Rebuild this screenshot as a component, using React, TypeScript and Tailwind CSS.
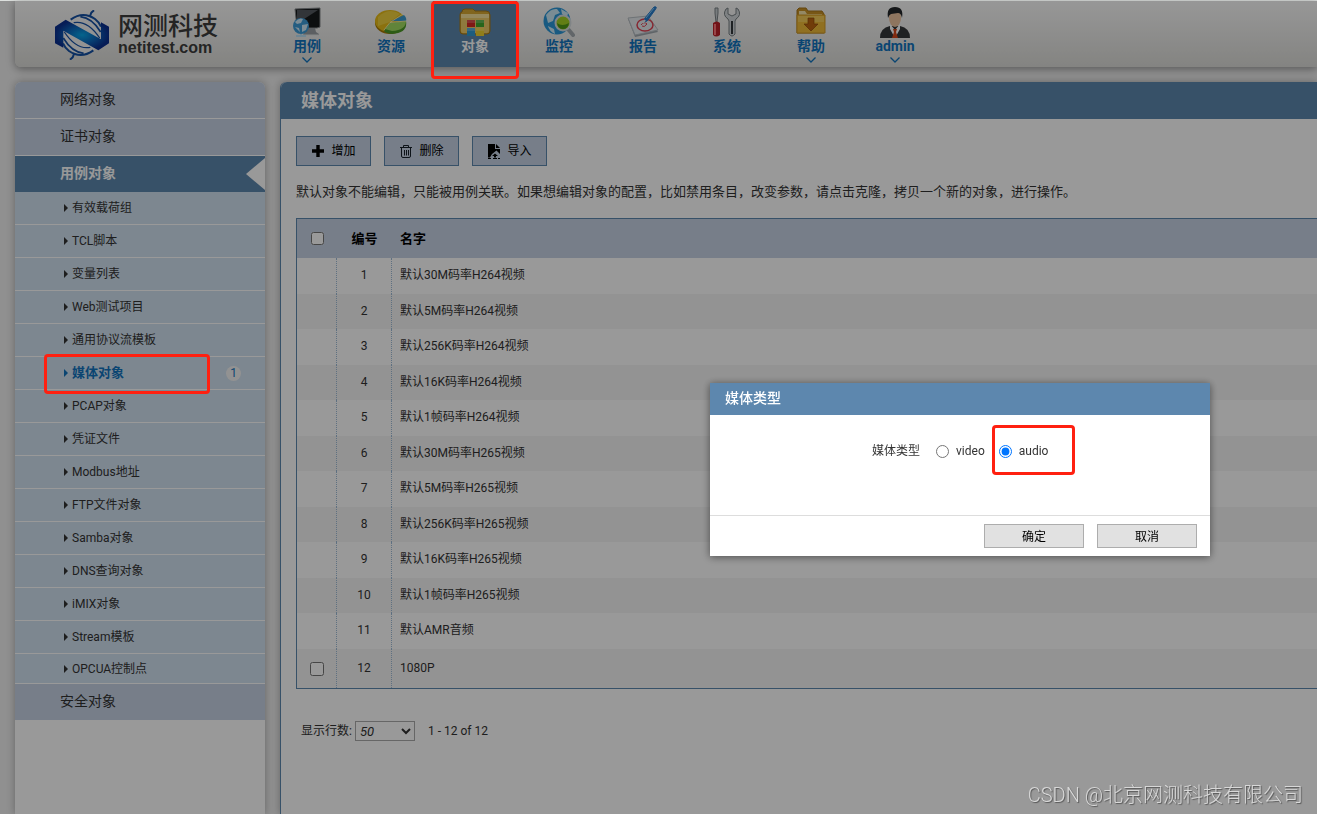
import { useState } from 'react';
import type { ReactNode } from 'react';

interface NavItem {
  label: string;
  icon: ReactNode;
  hasMenu?: boolean;
}

function Logo() {
  return (
    <svg viewBox="0 0 162 150" className="h-[50px] w-[54px]" aria-hidden="true">
      <defs>
        <radialGradient id="logo-blue" cx="50%" cy="50%" r="50%">
          <stop offset="0" stopColor="#08a8ea" />
          <stop offset="0.55" stopColor="#0c66bd" />
          <stop offset="1" stopColor="#0b3090" />
        </radialGradient>
        <g id="logo-globe">
          <path d="M47 29Q84 2 120 27Q132 36 138 50" strokeWidth="6" />
          <path d="M76 20Q112 24 137 66" strokeWidth="5" />
          <path d="M56 38Q98 30 134 84" strokeWidth="4" />
          <path d="M104 21L109 8L117 1" strokeWidth="6" />
        </g>
      </defs>
      <circle cx="81" cy="75" r="57" fill="#f6f6f6" />
      <g fill="none" stroke="#1450a4">
        <use href="#logo-globe" />
        <use href="#logo-globe" transform="rotate(180 81 75)" />
      </g>
      <path d="M0 50L32 29L138 88V37L162 50V100L130 121L25 62V113L0 100Z" fill="url(#logo-blue)" />
    </svg>
  );
}

function CaseIcon() {
  return (
    <svg viewBox="0 0 32 32" className="h-8 w-8" aria-hidden="true">
      <path d="M4 3l25-1v19l-3 1H6z" fill="#17191b" stroke="#85898c" />
      <path d="M6 4h21L10 15 6 13z" fill="#54595f" />
      <path d="M15 22h9l1 4 3 2v1H12z" fill="#999fa4" />
      <path d="M12 29h16" stroke="#e0e3e5" />
      <circle cx="10" cy="20" r="8" fill="#3d9bd8" />
      <path d="M4 16q4-5 8-3l-2 4-4 1zM11 19l6-1-2 6-4 2zM4 21l4 1 1 4z" fill="#cfeaf8" />
      <path d="M10 28v2M5 30h10" stroke="#b9dff5" strokeWidth="2" />
    </svg>
  );
}

function PieIcon() {
  return (
    <svg viewBox="0 0 32 32" className="h-8 w-8" aria-hidden="true">
      <ellipse cx="15" cy="17" rx="15" ry="11" fill="#a77900" />
      <ellipse cx="15" cy="15" rx="15" ry="11" fill="#e8bd18" />
      <path d="M3 11Q14 1 25 8L15 16L3 20Z" fill="#f7dc57" opacity=".6" />
      <path d="M16 15L29 9Q32 12 31 15Z" fill="#3d9ccf" />
      <path d="M15 17L31 15Q33 27 17 28Q10 27 9 25Z" fill="#4b9926" />
      <path d="M15 17L31 15Q31 24 17 25L10 23Z" fill="#a2dc62" />
      <path d="M9 24L15 16.5L31 15M15 16.5L28 8" fill="none" stroke="#fff3b5" strokeWidth=".8" />
    </svg>
  );
}

function ObjectIcon() {
  return (
    <svg viewBox="0 0 32 32" className="h-8 w-8" aria-hidden="true">
      <path d="M3 6q0-3 3-3h8l2 2h11q4 0 4 4v16q0 3-3 3H4q-3 0-3-3V9q0-3 2-3z" fill="#d8a932" stroke="#a57919" />
      <path d="M2 8h28v17q0 2-2 2H4q-2 0-2-2z" fill="#efcc68" />
      <path d="M2 8h28v4H2z" fill="#f8e39a" />
      <path d="M8 14h8v7H8z" fill="#d42924" />
      <path d="M17 14h8v7h-8z" fill="#42a82e" />
      <path d="M8 22h8v8H8z" fill="#319bd3" />
      <path d="M17 22h8v8h-8z" fill="#f1d22d" />
      <path d="M8 14h8v3H8zM17 14h8v3h-8zM8 22h8v3H8zM17 22h8v3h-8z" fill="#fff" opacity=".2" />
    </svg>
  );
}

function MonitorIcon() {
  return (
    <svg viewBox="0 0 32 32" className="h-8 w-8" aria-hidden="true">
      <circle cx="14" cy="15" r="13.5" fill="#2a96d7" />
      <path d="M3 9Q8 2 14 3l3 4-5 2-2 6-5 2zM18 3l7 4-1 5-5-4zM5 20l6 3 1 5q-6-3-7-8z" fill="#cceaf7" />
      <path d="M25 23l5 6" stroke="#a3abb0" strokeWidth="4" strokeLinecap="round" />
      <circle cx="20" cy="17" r="7.5" fill="#a3d323" stroke="#d6dde0" strokeWidth="2" />
      <path d="M14 17q5 4 12 0q-1 6-6 6t-6-6z" fill="#4e9818" />
    </svg>
  );
}

function ReportIcon() {
  return (
    <svg viewBox="0 0 32 32" className="h-8 w-8" aria-hidden="true">
      <path d="M1 13l20-2 10 15-23 5z" fill="#9fa7ad" />
      <path d="M1 12l20-2 10 14-23 5z" fill="#e6ebef" stroke="#b8bfc4" />
      <ellipse cx="18" cy="19" rx="8" ry="6" fill="none" stroke="#df4252" strokeWidth="1.5" />
      <path d="M14 19q3-4 6-1-3 4-5 2" fill="none" stroke="#df4252" />
      <path d="M27 1q4-1 1 3l-8 11-3 1 1-4z" fill="#287dcc" stroke="#287dcc" />
      <path d="M27 2L19 12" stroke="#83c7f5" />
      <path d="M16 17l2-3" stroke="#e8edf0" strokeWidth="2" />
    </svg>
  );
}

function SystemIcon() {
  return (
    <svg viewBox="0 0 32 32" className="h-8 w-8" aria-hidden="true">
      <path d="M4 2h3v5l-1 9H5L4 7z" fill="#c9cfd2" stroke="#7b8286" />
      <path d="M2 17q4-3 7 0v12q-4 3-7 0z" fill="#bd2029" />
      <path d="M4 18v11" stroke="#ff7478" strokeWidth="2" />
      <path
        d="M15 3q-4 6 2 10l1 2v13q3 4 6 0V15l1-2q6-4 2-10l-2-1v6l-4 2-4-2V2z"
        fill="#d2d8da"
        stroke="#788084"
      />
      <path d="M20 15h2v13h-2z" fill="#32383b" />
    </svg>
  );
}

function HelpIcon() {
  return (
    <svg viewBox="0 0 32 32" className="h-8 w-8" aria-hidden="true">
      <path d="M2 27V4l2-2h7l2 3h14l2 3v19z" fill="#c99225" stroke="#a8761c" />
      <path d="M4 5h6l2 3h15v3H4z" fill="#f7e5a8" />
      <path d="M2 9h28v18H2z" fill="#f1bb38" stroke="#d19b26" />
      <path d="M3 10h26v6H3z" fill="#f9d66c" opacity=".6" />
      <path d="M13 12h6v6h4l-7 7-7-7h4z" fill="#bd650f" stroke="#914b0b" strokeWidth=".7" />
    </svg>
  );
}

function AdminIcon() {
  return (
    <svg viewBox="0 0 32 32" className="h-8 w-8" aria-hidden="true">
      <path d="M1 32q0-10 10-12h10q10 2 10 12z" fill="#34373a" />
      <path d="M11 18l5 6 5-6v5l-5 9-5-9z" fill="#fff" />
      <path d="M14 23h4l-1 3 2 6h-6l2-6z" fill="#d64619" />
      <ellipse cx="16" cy="12" rx="6" ry="9" fill="#edc39f" />
      <path d="M9 12Q7 1 16 1T23 12Q22 7 19 7L12 8Q10 9 9 12z" fill="#24272a" />
    </svg>
  );
}

function ImportIcon() {
  return (
    <svg viewBox="0 0 14 16" className="h-4 w-3.5" aria-hidden="true">
      <path d="M1 1h7v5h5v5L9.500 7.500 5 11 3 14.500H1z" fill="#000" />
      <path d="M9 1l4 4H9zM8 10.500l3 2.500H9v1.500H7V13H5z" fill="#000" />
      <path d="M1 15.500h3M6 15.500h4M11 15.500h2" stroke="#000" />
    </svg>
  );
}

function TrashIcon() {
  return (
    <svg viewBox="0 0 14 14" className="h-3.5 w-3.5" fill="none" stroke="#16202a" aria-hidden="true">
      <path d="M1 3.5h12M4.5 3V1.5h5V3M2.5 4v8q0 1.500 1.500 1.500h6q1.500 0 1.500-1.500V4M5.500 6v5.500M7.500 6v5.500M9.500 6v5.500" />
    </svg>
  );
}

function PlusIcon() {
  return (
    <svg viewBox="0 0 14 14" className="h-3.5 w-3.5" aria-hidden="true">
      <path d="M7 1v12M1 7h12" stroke="#000" strokeWidth="3.4" />
    </svg>
  );
}

const navItems: NavItem[] = [
  { label: '用例', icon: <CaseIcon />, hasMenu: true },
  { label: '资源', icon: <PieIcon /> },
  { label: '对象', icon: <ObjectIcon /> },
  { label: '监控', icon: <MonitorIcon /> },
  { label: '报告', icon: <ReportIcon /> },
  { label: '系统', icon: <SystemIcon /> },
  { label: '帮助', icon: <HelpIcon />, hasMenu: true },
  { label: 'admin', icon: <AdminIcon />, hasMenu: true },
];

const subItems = [
  '有效载荷组',
  'TCL脚本',
  '变量列表',
  'Web测试项目',
  '通用协议流模板',
  '媒体对象',
  'PCAP对象',
  '凭证文件',
  'Modbus地址',
  'FTP文件对象',
  'Samba对象',
  'DNS查询对象',
  'iMIX对象',
  'Stream模板',
  'OPCUA控制点',
];

const mediaNames = [
  '默认30M码率H264视频',
  '默认5M码率H264视频',
  '默认256K码率H264视频',
  '默认16K码率H264视频',
  '默认1帧码率H264视频',
  '默认30M码率H265视频',
  '默认5M码率H265视频',
  '默认256K码率H265视频',
  '默认16K码率H265视频',
  '默认1帧码率H265视频',
  '默认AMR音频',
  '1080P',
];

const toolbar = [
  { label: '增加', icon: <PlusIcon /> },
  { label: '删除', icon: <TrashIcon /> },
  { label: '导入', icon: <ImportIcon /> },
];

function Header() {
  return (
    <header className="ml-[15px] flex h-[66px] rounded-bl-md bg-linear-to-b from-[#fcfcfc] to-[#dcdcd8] shadow-[0_2px_8px_rgba(0,0,0,0.4)]">
      <a href="#home" className="flex w-[250px] shrink-0 items-center gap-[9px] pt-0.5 pl-10">
        <Logo />
        <span className="flex flex-col text-[#3c3c3c]">
          <span className="text-[25px] leading-[26px] font-medium">网测科技</span>
          <span className="font-['Liberation_Sans',sans-serif] text-base leading-4 font-bold">netitest.com</span>
        </span>
      </a>
      <nav className="flex">
        {navItems.map((item) => {
          const active = item.label === '对象';
          return (
            <a
              key={item.label}
              href={`#${item.label}`}
              className={`relative flex w-[84px] flex-col items-center pt-[5px] text-sm font-bold ${
                active ? 'bg-[#5d87ae] text-white' : 'text-[#1274be]'
              }`}
            >
              {item.icon}
              <span className="leading-4">{item.label}</span>
              {item.hasMenu ? (
                <svg viewBox="0 0 10 6" className="mt-[3px] h-1.5 w-2.5" aria-hidden="true">
                  <path d="M.5 .5L5 5L9.5 .5" fill="none" stroke="#1274be" strokeWidth="1.300" />
                </svg>
              ) : null}
              {active ? (
                <span className="absolute -inset-x-0.5 top-0 z-20 h-[78px] rounded-sm border-3 border-[#ff2010]" />
              ) : null}
            </a>
          );
        })}
      </nav>
    </header>
  );
}

function Sidebar() {
  return (
    <aside className="flex w-[250px] shrink-0 flex-col rounded-t-md bg-white text-[#333] shadow-[0_0_8px_rgba(0,0,0,0.3)]">
      <a href="#network" className="flex h-[37px] items-center rounded-t-md border-b border-white bg-[#c6d2e5] pb-0.5 pl-[45px] text-sm">
        网络对象
      </a>
      <a href="#cert" className="flex h-[37px] items-center border-b border-white bg-[#c6d2e5] pb-0.5 pl-[45px] text-sm">
        证书对象
      </a>
      <a href="#case" className="flex h-9 items-center justify-between bg-[#5d87ae] pl-[45px] text-sm font-bold text-white">
        <span className="pb-0.5">用例对象</span>
        <svg viewBox="0 0 19 32" className="h-8 w-[19px]" aria-hidden="true">
          <path d="M19 0V32L0 16Z" fill="#fff" />
        </svg>
      </a>
      <ul>
        {subItems.map((name) => {
          const active = name === '媒体对象';
          return (
            <li key={name} className="h-[33px] border-b border-white bg-[#d0e1f0] last:h-[30px]">
              <a
                href={`#${name}`}
                className={`relative flex h-full items-center gap-1 pl-[49px] ${
                  active ? 'text-[13px] font-bold text-[#1274be]' : 'text-xs'
                }`}
              >
                <svg viewBox="0 0 4 8" className="h-2 w-1" fill="currentColor" aria-hidden="true">
                  <path d="M0 0L4 4L0 8Z" />
                </svg>
                {name}
                {active ? (
                  <>
                    <span className="mr-6 ml-auto flex size-[15px] items-center justify-center rounded-full bg-[#f4f4f4] text-xs font-normal">
                      1
                    </span>
                    <span className="absolute -top-[3px] left-[29px] z-20 h-10 w-[166px] rounded-sm border-3 border-[#ff2010]" />
                  </>
                ) : null}
              </a>
            </li>
          );
        })}
      </ul>
      <a href="#security" className="flex h-9 items-center bg-[#c6d2e5] pb-0.5 pl-[45px] text-sm">
        安全对象
      </a>
    </aside>
  );
}

function MediaTable() {
  return (
    <table className="mt-4 w-full border-separate border-spacing-0 border-y border-l border-[#5d87ae] text-left text-xs text-[#333]">
      <thead>
        <tr className="h-[39px] bg-[#c6d2e5] text-[13px] text-black">
          <th className="w-10 text-center">
            <input type="checkbox" aria-label="全选" className="mx-auto block size-[13px]" />
          </th>
          <th className="w-[55px] text-center font-bold">编号</th>
          <th className="pl-2 font-bold">名字</th>
        </tr>
      </thead>
      <tbody>
        {mediaNames.map((name, index) => (
          <tr key={name} className="odd:h-9 even:h-[35px] even:bg-[#f6f6f6] even:last:h-[39px]">
            <td className="border-r border-dotted border-r-[#9dbbd8]">
              {index === mediaNames.length - 1 ? (
                <input type="checkbox" aria-label={name} className="mx-auto block size-3.5" />
              ) : null}
            </td>
            <td className="border-r border-dotted border-r-[#9dbbd8] pb-0.5 text-center">{index + 1}</td>
            <td className="pb-0.5 pl-2">{name}</td>
          </tr>
        ))}
      </tbody>
    </table>
  );
}

function MediaTypeDialog() {
  const [mediaType, setMediaType] = useState('audio');

  return (
    <div
      role="dialog"
      aria-labelledby="media-type-title"
      className="fixed top-[383px] right-[107px] z-30 w-[500px] bg-white text-xs text-[#333] shadow-[0_1px_8px_rgba(0,0,0,0.5)]"
    >
      <h2 id="media-type-title" className="h-8 bg-[#5d87ae] px-[15px] text-sm leading-[30px] font-medium text-white">
        媒体类型
      </h2>
      <div role="radiogroup" aria-labelledby="media-type-label" className="flex h-[100px] items-start pt-7 pl-[162px]">
        <span id="media-type-label" className="mr-4 leading-4">
          媒体类型
        </span>
        {['video', 'audio'].map((type) => (
          <label key={type} className="relative mr-3.5 flex h-4 items-center gap-[7px]">
            <input
              type="radio"
              name="mediaType"
              value={type}
              checked={mediaType === type}
              onChange={() => setMediaType(type)}
              className="size-[13px]"
            />
            {type}
            {type === 'audio' ? (
              <span className="absolute -top-[18px] -left-[7px] h-[50px] w-[83px] rounded-sm border-3 border-[#ff2010]" />
            ) : null}
          </label>
        ))}
      </div>
      <div className="flex justify-end gap-[13px] border-t border-[#ddd] px-[13px] py-2">
        <button type="button" className="h-6 w-[100px] border border-[#adadad] bg-[#e1e1e1] pt-0.5 text-black">
          确定
        </button>
        <button type="button" className="h-6 w-[100px] border border-[#adadad] bg-[#e1e1e1] pt-0.5 text-black">
          取消
        </button>
      </div>
    </div>
  );
}

export default function App() {
  return (
    <div className="flex min-h-screen flex-col overflow-hidden bg-[#f0f0f0] font-[Roboto,'Noto_Sans_CJK_SC',sans-serif]">
      <div className="h-px bg-[#dde0de]" />
      <Header />
      <div className="mt-[15px] ml-[15px] flex flex-1 gap-[15px]">
        <Sidebar />
        <main className="min-w-0 flex-1 rounded-tl-md border-l border-[#5d87ae] bg-white shadow-[0_0_8px_rgba(0,0,0,0.3)]">
          <h1 className="h-[37px] rounded-tl-md bg-[#5d87ae] pl-5 text-lg leading-[38px] font-bold text-white">媒体对象</h1>
          <div className="pt-[17px] pl-[15px]">
            <div className="flex gap-[13px]">
              {toolbar.map((button) => (
                <button
                  key={button.label}
                  type="button"
                  className="flex h-[30px] w-[75px] items-center justify-center gap-1.5 border border-[#5d87ae] bg-[#c6d2e5] text-xs text-black"
                >
                  {button.icon}
                  {button.label}
                </button>
              ))}
            </div>
            <p className="mt-4 text-[13px] leading-5 text-[#333]">
              默认对象不能编辑，只能被用例关联。如果想编辑对象的配置，比如禁用条目，改变参数，请点击克隆，拷贝一个新的对象，进行操作。
            </p>
            <MediaTable />
            <div className="mt-8 flex items-center pl-[5px] text-xs text-[#333]">
              <label htmlFor="page-size">显示行数:</label>
              <select
                id="page-size"
                defaultValue="50"
                className="mr-[13px] ml-[3px] h-5 w-[60px] border border-[#aaa] bg-white text-[13px] italic"
              >
                <option>20</option>
                <option>50</option>
                <option>100</option>
              </select>
              <span>1 - 12 of 12</span>
            </div>
          </div>
        </main>
      </div>
      <div className="fixed inset-x-0 top-px bottom-0 z-10 bg-black/40" />
      <MediaTypeDialog />
      <div className="fixed right-3.5 bottom-1 z-30 text-xl leading-[30px] font-light text-[#d8d8d8] [text-shadow:1px_1px_1px_#555]">
        CSDN @北京网测科技有限公司
      </div>
    </div>
  );
}
